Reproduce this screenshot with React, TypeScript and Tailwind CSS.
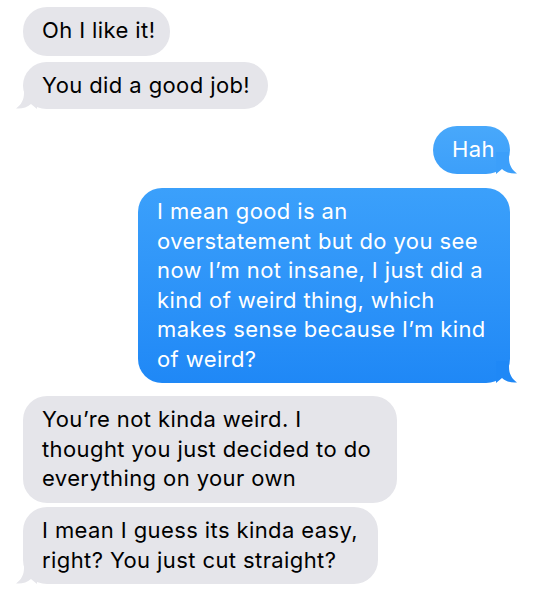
import React from 'react'

interface BubbleProps {
  side: 'in' | 'out';
  tail?: string;
  className?: string;
  children: React.ReactNode;
}

const font = { fontFamily: 'Inter, "Noto Sans", sans-serif' }

const Tail = ({ side, color }: { side: 'in' | 'out'; color: string }) => {
  if (side === 'in') {
    return (
      <svg className='absolute -left-[8px] bottom-0' width='22' height='22' viewBox='0 0 22 22'>
        <path d='M9 0 L9 6 C9 13 6 18 1 21.5 C7 22 12 20.5 16 17 L22 22 L22 0 Z' fill={color} />
      </svg>
    )
  }
  return (
    <svg className='absolute -right-[8px] bottom-0' width='22' height='22' viewBox='0 0 22 22'>
      <path d='M13 0 L13 6 C13 13 16 18 21 21.5 C15 22 10 20.5 6 17 L0 22 L0 0 Z' fill={color} />
    </svg>
  )
}

const Bubble: React.FC<BubbleProps> = ({ side, tail, className, children }) => {
  const base = side === 'in'
    ? 'bg-[#e5e5ea] text-black self-start'
    : 'text-white self-end'
  return (
    <div className={`relative rounded-[24px] pl-[19px] pr-[10px] py-[9px] text-[22px] leading-[29.5px] tracking-[0.4px] whitespace-nowrap ${base} ${className ?? ''}`} style={font}>
      {tail && <Tail side={side} color={tail} />}
      <div className='relative'>{children}</div>
    </div>
  )
}

export default function App() {
  return (
    <div className='w-[534px] h-[593px] bg-white overflow-hidden flex flex-col pl-[23px] pr-[24px] pt-[7px]'>
      <Bubble side='in' className='w-[147px] h-[49px]'>Oh I like it!</Bubble>
      <Bubble side='in' tail='#e5e5ea' className='w-[245px] h-[47px] mt-[6px]'>You did a good job!</Bubble>
      <Bubble side='out' tail='#3c9ffa' className='w-[77px] h-[48px] mt-[17px] bg-gradient-to-b from-[#48a8fb] to-[#3c9ffa]'>Hah</Bubble>
      <Bubble side='out' tail='#1f88f6' className='w-[372px] h-[195px] mt-[14px] bg-gradient-to-b from-[#3ba0fb] to-[#1f88f6]'>
        I mean good is an<br />
        overstatement but do you see<br />
        now I’m not insane, I just did a<br />
        kind of weird thing, which<br />
        makes sense because I’m kind<br />
        of weird?
      </Bubble>
      <Bubble side='in' className='w-[374px] h-[107px] mt-[13px]'>
        You’re not kinda weird. I<br />
        thought you just decided to do<br />
        everything on your own
      </Bubble>
      <Bubble side='in' tail='#e5e5ea' className='w-[355px] h-[77px] mt-[4px]'>
        I mean I guess its kinda easy,<br />
        right? You just cut straight?
      </Bubble>
    </div>
  )
}
